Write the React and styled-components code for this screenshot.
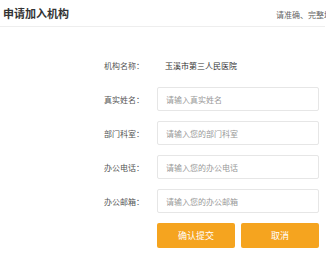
import React from "react"
import styled, { createGlobalStyle } from "styled-components"

const GlobalStyle = createGlobalStyle`
  html, body {
    margin: 0;
    padding: 0;
    background: #fff;
    overflow: hidden;
  }
  body {
    font-family: "Noto Sans CJK SC", "Noto Sans", sans-serif;
    color: #333;
  }
`

const Page = styled.div`
  width: 326px;
  height: 253px;
  overflow: hidden;
`

const Header = styled.div`
  display: flex;
  align-items: center;
  height: 26px;
  padding-left: 3px;
  border-bottom: 1px solid #eeeeee;
  margin-right: 1px;
`

const Title = styled.h1`
  flex: 1;
  margin: 0;
  font-size: 11px;
  font-weight: bold;
  color: #333;
  line-height: 26px;
`

const Note = styled.div`
  flex: 0 0 49px;
  min-width: 0;
  font-size: 8px;
  color: #666;
  white-space: nowrap;
  padding-top: 3px;
`

const Form = styled.div`
  display: grid;
  grid-template-columns: 53px 162px;
  grid-auto-rows: 24px;
  row-gap: 10px;
  padding: 26px 0 0 104px;
`

const Label = styled.div`
  display: flex;
  align-items: center;
  font-size: 8px;
  color: #555;
`

const Value = styled.div`
  display: flex;
  align-items: center;
  padding-left: 8px;
  font-size: 8px;
  color: #333;
`

const Input = styled.input`
  box-sizing: border-box;
  width: 162px;
  height: 24px;
  margin: 0;
  padding: 0 8px;
  border: 1px solid #e6e6e6;
  border-radius: 2px;
  font-family: inherit;
  font-size: 8px;
  color: #333;
  outline: none;
  &::placeholder {
    color: #999;
  }
`

const Actions = styled.div`
  grid-column: 2;
  display: flex;
  gap: 6px;
`

const Button = styled.button`
  width: 78px;
  height: 25px;
  border: none;
  border-radius: 2px;
  background: #f5a41f;
  color: #fff;
  font-family: inherit;
  font-size: 9px;
  padding: 0;
  cursor: pointer;
`

const fields = [
  { label: "真实姓名：", placeholder: "请输入真实姓名" },
  { label: "部门科室：", placeholder: "请输入您的部门科室" },
  { label: "办公电话：", placeholder: "请输入您的办公电话" },
  { label: "办公邮箱：", placeholder: "请输入您的办公邮箱" },
]

const App = () => {
  return (
    <>
      <GlobalStyle />
      <Page>
        <Header>
          <Title>申请加入机构</Title>
          <Note>请准确、完整填写以下信息</Note>
        </Header>
        <Form>
          <Label>机构名称：</Label>
          <Value>玉溪市第三人民医院</Value>
          {fields.map(f => (
            <React.Fragment key={f.label}>
              <Label>{f.label}</Label>
              <Input placeholder={f.placeholder} />
            </React.Fragment>
          ))}
          <Actions>
            <Button>确认提交</Button>
            <Button>取消</Button>
          </Actions>
        </Form>
      </Page>
    </>
  )
}

export default App
